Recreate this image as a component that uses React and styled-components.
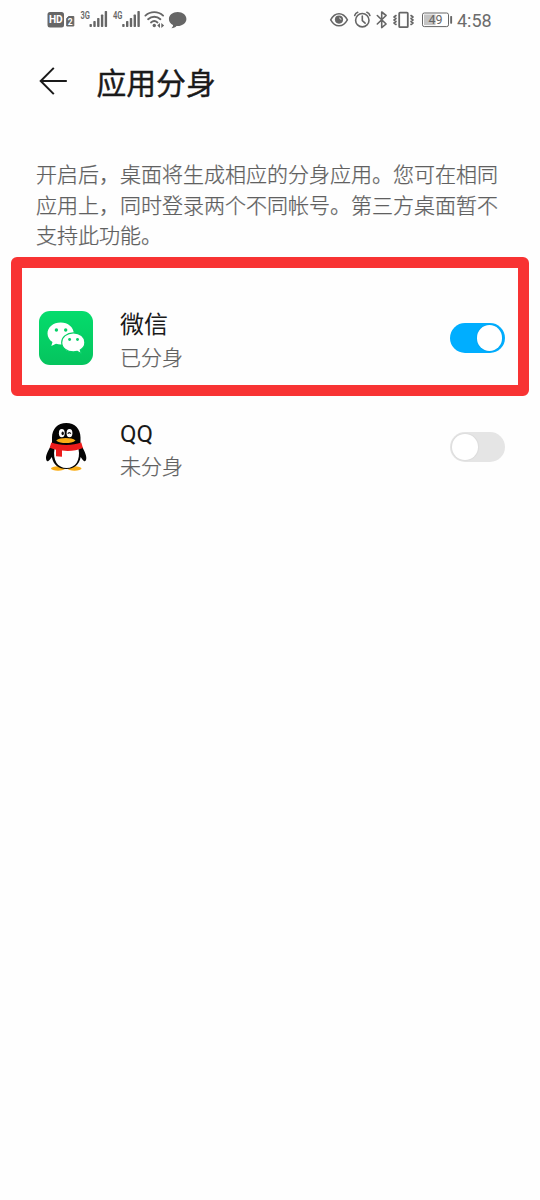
import React from 'react';
import styled, { createGlobalStyle } from 'styled-components';

const GlobalStyle = createGlobalStyle`
  * { box-sizing: border-box; }
  body {
    margin: 0;
    background: #fefefe;
    font-family: Roboto, 'Noto Sans CJK SC', sans-serif;
    color: #1a1a1a;
  }
`;

const Screen = styled.main`
  width: 540px;
  min-height: 1200px;
  background: #fefefe;
  overflow: hidden;
`;

const StatusBar = styled.header`
  display: flex;
  justify-content: space-between;
  height: 40px;
  padding: 0 48px 0 47px;
`;

const StatusGroup = styled.div`
  display: flex;
  align-items: center;
`;

const StatusIcons = styled.svg`
  display: block;
  height: 40px;
  color: #666;
  font-family: Roboto, sans-serif;
`;

const Clock = styled.span`
  width: 35px;
  margin-left: 4px;
  color: #6c6c6c;
  font-size: 18px;
  line-height: 40px;
  padding-top: 1px;
  white-space: nowrap;
`;

const TitleBar = styled.div`
  display: flex;
  align-items: center;
  gap: 28.5px;
  height: 84px;
  padding-left: 39px;
`;

const BackButton = styled.button`
  display: flex;
  width: 29px;
  padding: 0;
  border: 0;
  background: none;
  color: #1a1a1a;
`;

const Title = styled.h1`
  margin: 0;
  padding-top: 3px;
  font-size: 29.8px;
  font-weight: 400;
  line-height: 40px;
  -webkit-text-stroke: 0.4px currentColor;
`;

const Description = styled.p`
  margin: 36px 36px 0;
  width: 464px;
  color: #606060;
  font-size: 21px;
  font-weight: 300;
  line-height: 30.5px;
  -webkit-text-stroke: 0.25px currentColor;
`;

const Highlight = styled.section`
  height: 139px;
  margin: 5.5px 11px 0;
  padding: 23px 13.5px 0 17px;
  border: 11px solid #f83333;
  border-radius: 6px;
`;

const PlainSection = styled.section`
  padding: 0 35.5px 0 39px;
  margin-top: 4px;
`;

const AppRow = styled.div`
  display: flex;
  align-items: center;
  height: 94px;
`;

const AppText = styled.div`
  flex: 1;
  margin-left: 27px;
  padding-top: 6px;
`;

const AppName = styled.div`
  font-size: 24px;
  line-height: 34px;
`;

const AppState = styled.div`
  color: #606060;
  font-size: 21px;
  font-weight: 300;
  line-height: 33px;
  -webkit-text-stroke: 0.25px currentColor;
`;

const Toggle = styled.button`
  display: flex;
  align-items: center;
  justify-content: ${({ $on }) => ($on ? 'flex-end' : 'flex-start')};
  width: 55px;
  height: 30px;
  padding: 0 2.5px;
  border: 0;
  border-radius: 15px;
  background: ${({ $on }) => ($on ? '#00aeff' : '#e5e5e5')};
`;

const Thumb = styled.span`
  width: 25.5px;
  height: 25.5px;
  border-radius: 50%;
  background: #fff;
  box-shadow: 0 0 2px rgba(0, 0, 0, 0.12);
`;

const SignalBars = ({ x }) => (
  <g transform={`translate(${x} 0)`} fill="currentColor">
    <rect x="0" y="24" width="2.4" height="3" rx="0.7" />
    <rect x="3.8" y="21" width="2.4" height="6" rx="0.7" />
    <rect x="7.6" y="18" width="2.4" height="9" rx="0.7" />
    <rect x="11.4" y="14.5" width="2.4" height="12.5" rx="0.7" />
    <rect x="15.2" y="11" width="2.4" height="16" rx="0.7" />
  </g>
);

const NetworkStatus = () => (
  <StatusIcons width="140" viewBox="47 0 140 40">
    <rect x="47.5" y="12" width="16.5" height="15.5" rx="2.5" fill="currentColor" />
    <text x="55.8" y="23.4" fontSize="10.2" fontWeight="700" textAnchor="middle" fill="#fff">HD</text>
    <path d="M68.5 16.500h5.3v9.500h-7.100V18.500z" fill="currentColor" stroke="currentColor" strokeLinejoin="round" />
    <text x="70.2" y="24.500" fontSize="8.500" fontWeight="700" textAnchor="middle" fill="#fff">2</text>
    <text x="80.5" y="18.5" fontSize="10" fontWeight="600" textLength="9.5" lengthAdjust="spacingAndGlyphs" fill="currentColor">3G</text>
    <SignalBars x={89.5} />
    <text x="113" y="18.5" fontSize="10" fontWeight="600" textLength="9.5" lengthAdjust="spacingAndGlyphs" fill="currentColor">4G</text>
    <SignalBars x={122.2} />
    <g fill="none" stroke="currentColor" strokeWidth="1.9" strokeLinecap="round">
      <path d="M145.4 15.6c5.1-4.7 12.6-4.7 17.7 0" />
      <path d="M148.1 19.2c3.6-3.3 8.7-3.3 12.3 0" />
      <path d="M151 22.4c2-1.6 4.5-1.6 6.5 0" />
    </g>
    <circle cx="154.3" cy="25.5" r="1.7" fill="currentColor" />
    <path d="M160 23v5l-2.8-2.5zM161.3 23v5l2.8-2.5z" fill="currentColor" />
    <path d="M177.7 12c-5 0-8.8 3-8.8 7 0 2.7 1.6 4.9 4.1 6 .2 1.3-.6 2.4-1.6 3.2 2.3-.1 4-.9 5.1-2.2 5.500 .4 9.900-2.700 9.900-7 0-4-3.700-7-8.700-7z" fill="currentColor" />
  </StatusIcons>
);

const DeviceStatus = () => (
  <StatusIcons width="124" viewBox="329 0 124 40">
    <path d="M330.700 19.800c4.400-8.100 12.200-8.100 16.700 0-4.500 7.900-12.300 7.900-16.700 0z" fill="none" stroke="currentColor" strokeWidth="1.500" />
    <circle cx="339" cy="19.600" r="4.100" fill="currentColor" />
    <path d="M339.600 17.600a1.900 1.900 0 0 0 1.700 1.700" fill="none" stroke="#fff" strokeWidth="0.900" />
    <g fill="none" stroke="currentColor" strokeWidth="1.600" strokeLinecap="round" strokeLinejoin="round">
      <circle cx="362.300" cy="20.200" r="6.700" />
      <path d="M362.300 16v4.600l2.800 2.500M354.700 15.500c.4-1.600 1.500-2.700 3-3.200M369.900 15.500c-.4-1.600-1.500-2.700-3-3.200" />
      <path d="M377.300 15.500l8.800 8.500-4.400 3.600V12l4.400 3.500-8.800 8.500" />
      <rect x="399.200" y="12.600" width="8.600" height="14.600" rx="0.800" strokeWidth="1.800" />
      <path d="M396 15.500l-2 1.500 2 1.500-2 1.500 2 1.500-2 1.500 2 1.500M411 15.500l2 1.500-2 1.500 2 1.500-2 1.500 2 1.500-2 1.500" strokeWidth="1.600" />
    </g>
    <rect x="422.500" y="13" width="26" height="13.600" rx="1.800" fill="#fff" stroke="currentColor" strokeWidth="1" />
    <rect x="424" y="14.500" width="11.500" height="10.600" fill="#c4c4c4" />
    <rect x="450.200" y="16" width="1.900" height="7.800" rx="0.700" fill="currentColor" />
    <text x="435.500" y="24.200" fontSize="12.500" textAnchor="middle" fill="currentColor">49</text>
  </StatusIcons>
);

const BackArrow = () => (
  <svg width="29" height="30" viewBox="0 0 29 30" fill="none" stroke="currentColor" strokeWidth="2">
    <path d="M27.800 14H2M14.800 .9L1.700 14l13.100 13.100" />
  </svg>
);

const WeChatIcon = () => (
  <svg width="54" height="54" viewBox="0 0 54 54">
    <defs>
      <linearGradient id="wechat" x1="0" y1="0" x2="0" y2="1">
        <stop offset="0" stopColor="#05dc6c" />
        <stop offset="1" stopColor="#05c45e" />
      </linearGradient>
    </defs>
    <rect width="54" height="54" rx="11" fill="url(#wechat)" />
    <path d="M21.700 11.500C14.200 11.500 8.500 16.300 8.500 22.500c0 3.600 1.900 6.500 5 8.600l-1.200 4 4.700-2.400c1.500.5 3.100.7 4.700.7 7.300 0 13.100-4.800 13.100-10.900s-5.800-11-13.100-11z" fill="#fff" />
    <path d="M34.400 21.800c-6.500 0-11.700 4.300-11.700 9.600s5.200 9.500 11.700 9.500c1.400 0 2.600-.2 3.900-.5l4.200 2.400-1.200-3.900c3-1.800 4.600-4.500 4.600-7.500 0-5.300-4.900-9.600-11.500-9.600z" fill="#fff" stroke="#05cf65" strokeWidth="1.200" />
    <g fill="#05d067">
      <circle cx="17.400" cy="19" r="1.700" />
      <circle cx="26.700" cy="19" r="1.700" />
      <circle cx="30.600" cy="28.500" r="1.450" />
      <circle cx="38.500" cy="28.500" r="1.450" />
    </g>
  </svg>
);

const QQIcon = () => (
  <svg width="54" height="54" viewBox="0 0 54 54">
    <ellipse cx="19" cy="48.500" rx="7" ry="2.200" fill="#faad15" />
    <ellipse cx="35.500" cy="48.500" rx="7" ry="2.200" fill="#faad15" />
    <path d="M27.300 3C18.700 3 13 9 13 17.500V24C9.300 30 7 34.700 7 38c0 2.100.9 3.800 2 3.200 1.300-.6 2.700-2.400 3.800-4.200 1.500 7.800 6.900 12 14.500 12S40.200 44.800 41.700 37c1.100 1.800 2.300 3.600 3.600 4.200 1.100.6 2-1.100 2-3.200 0-3.300-2.200-8-5.800-14v-6.500C41.500 9 35.900 3 27.300 3z" fill="#050505" />
    <path d="M15.500 29h24c2.200 11-3 19-12 19S13.500 40 15.500 29z" fill="#fff" />
    <path d="M12.300 22.500c8.500 3.300 21.500 3.300 30 0l1.600 5.400c-6.200 2.800-13.500 3.600-20.900 2.700v6.100l-6-.4v-6.600c-2.400-.5-4.500-1.100-6.300-1.900z" fill="#ed1c1c" />
    <ellipse cx="22.800" cy="13.200" rx="2.900" ry="4.100" fill="#fff" />
    <ellipse cx="30.500" cy="13.200" rx="2.900" ry="4.100" fill="#fff" />
    <ellipse cx="23.700" cy="13.400" rx="1.200" ry="1.800" fill="#111" />
    <path d="M28.800 13.800c.7-1.700 2.300-1.700 3 0" stroke="#111" strokeWidth="1.200" fill="none" />
    <path d="M17.200 20.400c4-3.100 15.300-3.100 19.300 0-4 3.500-15.300 3.500-19.300 0z" fill="#faad15" />
  </svg>
);

const AppItem = ({ icon, name, state, on }) => (
  <AppRow>
    {icon}
    <AppText>
      <AppName>{name}</AppName>
      <AppState>{state}</AppState>
    </AppText>
    <Toggle type="button" role="switch" aria-checked={on} aria-label={name} $on={on}>
      <Thumb />
    </Toggle>
  </AppRow>
);

export default function App() {
  return (
    <Screen lang="zh-CN">
      <GlobalStyle />
      <StatusBar>
        <StatusGroup><NetworkStatus /></StatusGroup>
        <StatusGroup>
          <DeviceStatus />
          <Clock>4:58</Clock>
        </StatusGroup>
      </StatusBar>
      <TitleBar>
        <BackButton type="button" aria-label="返回"><BackArrow /></BackButton>
        <Title>应用分身</Title>
      </TitleBar>
      <Description>
        开启后，桌面将生成相应的分身应用。您可在相同应用上，同时登录两个不同帐号。第三方桌面暂不支持此功能。
      </Description>
      <Highlight>
        <AppItem icon={<WeChatIcon />} name="微信" state="已分身" on />
      </Highlight>
      <PlainSection>
        <AppItem icon={<QQIcon />} name="QQ" state="未分身" on={false} />
      </PlainSection>
    </Screen>
  );
}
